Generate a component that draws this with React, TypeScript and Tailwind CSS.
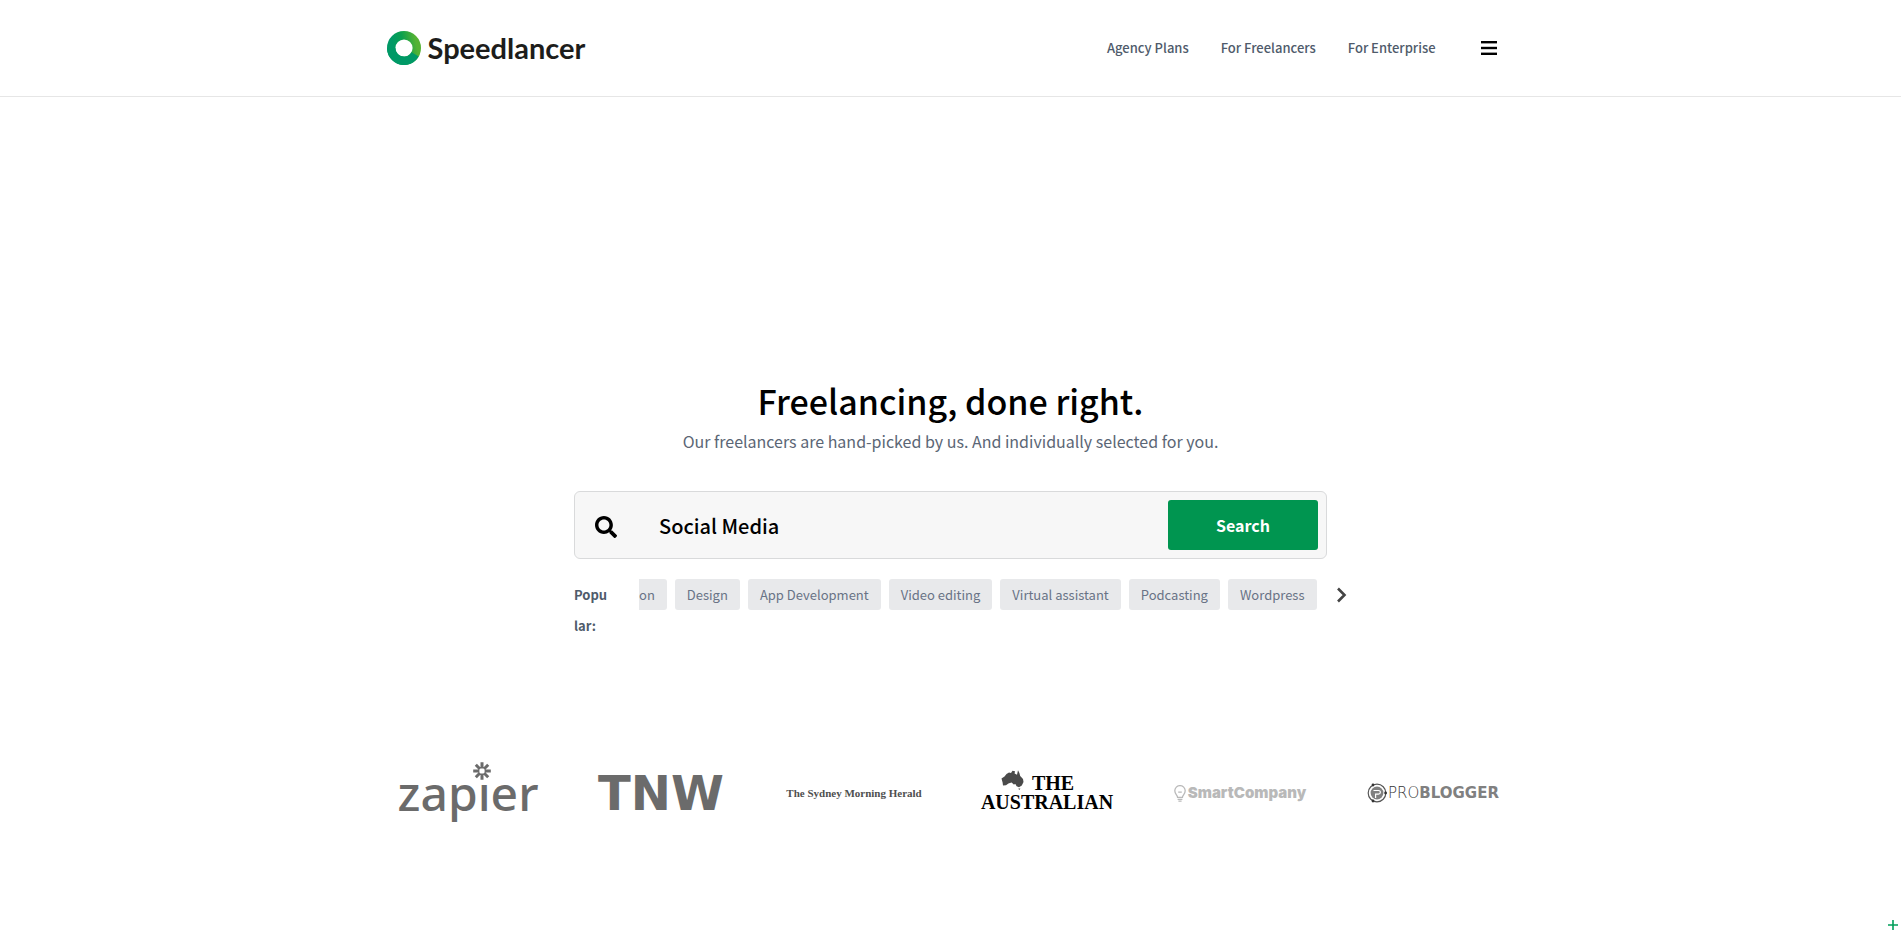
import type { ReactNode } from "react";
import { FaSearch } from "react-icons/fa";

const navLinks = ["Agency Plans", "For Freelancers", "For Enterprise"];

const popularTags = [
  "Design",
  "App Development",
  "Video editing",
  "Virtual assistant",
  "Podcasting",
  "Wordpress",
];

function SpeedlancerLogo() {
  return (
    <a href="#" className="flex items-center gap-[7px]">
      <svg width="34" height="34" viewBox="0 0 34 34" aria-hidden="true">
        <defs>
          <linearGradient id="ring" x1="0" y1="0.6" x2="1" y2="0.4">
            <stop offset="0.1" stopColor="#009966" />
            <stop offset="0.5" stopColor="#0aa04f" />
            <stop offset="1" stopColor="#54b233" />
          </linearGradient>
        </defs>
        <circle cx="17" cy="17" r="12.8" fill="none" stroke="url(#ring)" strokeWidth="8.4" />
        <path
          d="M28.1 23.4 A12.8 12.8 0 0 1 4.2 17"
          fill="none"
          stroke="#009966"
          strokeWidth="8.4"
        />
      </svg>
      <span className="font-['Lato',sans-serif] text-[29px] leading-[34px] font-bold text-[#1d1d1b]">
        Speedlancer
      </span>
    </a>
  );
}

function Header() {
  return (
    <header className="border-b border-[#e6e6e6]">
      <div className="mx-auto flex h-24 max-w-[1128px] items-center justify-between">
        <SpeedlancerLogo />
        <div className="flex items-center pr-[18px]">
          <nav className="flex gap-8">
            {navLinks.map((label) => (
              <a
                key={label}
                href="#"
                className="text-[13px] leading-6 font-medium whitespace-nowrap text-[#4f5b6b]"
              >
                {label}
              </a>
            ))}
          </nav>
          <button type="button" aria-label="Menu" className="ml-[45px] text-black">
            <svg width="16" height="14" viewBox="0 0 16 14" fill="currentColor" aria-hidden="true">
              <rect y="0" width="16" height="2.4" />
              <rect y="5.8" width="16" height="2.4" />
              <rect y="11.6" width="16" height="2.4" />
            </svg>
          </button>
        </div>
      </div>
    </header>
  );
}

function SearchBar() {
  return (
    <form
      className="flex items-center rounded-md border border-[#d9dadb] bg-[#f7f7f7] p-2"
      onSubmit={(event) => event.preventDefault()}
    >
      <label htmlFor="skill" aria-label="Skill" className="ml-3 shrink-0 pt-1 text-black">
        <FaSearch size={22} />
      </label>
      <input
        id="skill"
        type="text"
        defaultValue="Social Media"
        className="ml-[42px] h-[50px] min-w-0 flex-1 bg-transparent text-[20px] font-medium text-black outline-none"
      />
      <button
        type="submit"
        className="h-[50px] w-[150px] shrink-0 rounded-[3px] bg-[#009550] text-[16px] font-bold text-white"
      >
        Search
      </button>
    </form>
  );
}

function PopularTags() {
  return (
    <div className="mt-5 -mr-5 flex items-start text-[13px] leading-[31px]">
      <div className="mr-7 w-[37px] shrink-0 font-bold break-all text-[#4f5b6b]">Popular:</div>
      <div className="flex min-w-0 flex-1 gap-2 overflow-hidden text-[#697386]">
        <a href="#" className="shrink-0 rounded-r-[3px] bg-[#e8e9eb] pr-3">
          on
        </a>
        {popularTags.map((tag) => (
          <a
            key={tag}
            href="#"
            className="shrink-0 rounded-[3px] bg-[#e8e9eb] px-3 whitespace-nowrap"
          >
            {tag}
          </a>
        ))}
      </div>
      <button type="button" aria-label="Next" className="ml-4 flex h-[31px] items-center">
        <svg width="11" height="16" viewBox="0 0 11 16" fill="none" aria-hidden="true">
          <path d="M2 1.5 L8.5 8 L2 14.5" stroke="#444" strokeWidth="2.6" />
        </svg>
      </button>
    </div>
  );
}

function ZapierLogo() {
  return (
    <div className="relative font-['Noto_Sans',sans-serif] text-[48px] leading-[64px] font-medium text-[#6b6b6b]">
      zapier
      <svg
        className="absolute top-0 left-[73px]"
        width="22"
        height="22"
        viewBox="-11 -10 22 22"
        stroke="#6b6b6b"
        strokeWidth="3"
        aria-hidden="true"
      >
        <rect x="-7" y="-8" width="14" height="20" fill="#fff" stroke="none" />
        <path d="M0 -8.8V-2.6M0 8.8V2.6M-8.8 0H-2.6M8.8 0H2.6M-6.2 -6.2L-2 -2M6.2 6.2L2 2M-6.2 6.2L-2 2M6.2 -6.2L2 -2" />
      </svg>
    </div>
  );
}

function AustralianLogo() {
  return (
    <div className="flex flex-col font-['Liberation_Serif',serif] text-[20px] leading-[19px] font-bold text-black">
      <div className="flex items-start gap-2 pl-5">
        <svg
          className="-mt-1"
          width="23"
          height="20"
          viewBox="0 0 23 20"
          fill="#4a4a4a"
          aria-hidden="true"
        >
          <path d="M0.5 8.5 L3.5 6.5 L5.5 4 L8 2.5 L10 3 L11.5 0.8 L14 1.2 L13.6 3.4 L16 4.8 L17 0.2 L18.4 3 L19.2 6 L22 9 L22.5 12 L20.8 15.6 L18 17.2 L15.6 16.2 L14.4 14 L12.8 14.4 L10.6 12.6 L7.4 13.6 L5 15.2 L2 15.4 L1.6 12.4 Z" />
          <path d="M17.4 18.4 h2 l-0.8 1.4 h-0.6 Z" />
        </svg>
        <span>THE</span>
      </div>
      <span>AUSTRALIAN</span>
    </div>
  );
}

function SmartCompanyLogo() {
  return (
    <div className="flex items-center gap-[2px] text-[#b9b9b9]">
      <svg
        width="12"
        height="17"
        viewBox="0 0 12 17"
        fill="none"
        stroke="currentColor"
        strokeWidth="1.3"
        aria-hidden="true"
      >
        <path d="M3.6 12.4 C3.6 10 0.8 9.4 0.8 5.8 A5.2 5.2 0 0 1 11.2 5.8 C11.2 9.4 8.4 10 8.4 12.4 Z" />
        <path d="M4.2 7.2 H7.8 M3.6 14.4 H8.4 M4.4 16.2 H7.6" />
      </svg>
      <span className="font-['Inter',sans-serif] text-[15px] leading-5 font-black">
        SmartCompany
      </span>
    </div>
  );
}

function ProBloggerLogo() {
  return (
    <div className="flex items-center gap-px">
      <svg width="20" height="20" viewBox="0 0 20 20" fill="none" aria-hidden="true">
        <circle cx="10" cy="10" r="8.8" stroke="#555" strokeWidth="1.2" />
        <circle cx="10" cy="10" r="6.4" fill="#808080" />
        <path d="M6.5 7.5 H11.5 A1.8 1.8 0 0 1 11.5 11.2 H8.6 V15" stroke="#fff" strokeWidth="1.2" />
        <circle cx="6" cy="2" r="1.4" fill="#333" />
        <circle cx="6" cy="18" r="1.4" fill="#333" />
        <circle cx="18.6" cy="10" r="1.4" fill="#333" />
      </svg>
      <span className="font-['DejaVu_Sans',sans-serif] text-[15px] leading-5 font-extralight text-[#333]">
        PRO<span className="font-bold text-[#808080]">BLOGGER</span>
      </span>
    </div>
  );
}

function Press({ children }: { children: ReactNode }) {
  return <li className="flex h-16 items-center justify-center whitespace-nowrap">{children}</li>;
}

function PressLogos() {
  return (
    <ul className="mx-auto grid max-w-[1158px] grid-cols-6">
      <Press>
        <ZapierLogo />
      </Press>
      <Press>
        <span className="font-['DejaVu_Sans',sans-serif] text-[48px] leading-[48px] font-bold text-[#6b6b6b]">
          TNW
        </span>
      </Press>
      <Press>
        <span className="font-['Liberation_Serif',serif] text-[11px] leading-5 font-bold text-[#4f4f4f]">
          The Sydney Morning Herald
        </span>
      </Press>
      <Press>
        <AustralianLogo />
      </Press>
      <Press>
        <SmartCompanyLogo />
      </Press>
      <Press>
        <ProBloggerLogo />
      </Press>
    </ul>
  );
}

export default function App() {
  return (
    <div className="relative min-h-screen bg-white font-['Noto_Sans_CJK_SC',sans-serif]">
      <Header />
      <main>
        <section className="mx-auto max-w-[753px] pt-[280px]">
          <h1 className="mb-0.5 text-center text-[34px] leading-[48px] font-medium text-black">
            Freelancing, done right.
          </h1>
          <p className="mb-9 text-center text-[16px] leading-[28px] text-[#5b6675]">
            Our freelancers are hand-picked by us. And individually selected for you.
          </p>
          <SearchBar />
          <PopularTags />
        </section>
        <section className="pt-[120px]">
          <PressLogos />
        </section>
      </main>
      <button
        type="button"
        aria-label="Open chat"
        className="absolute right-[3px] bottom-[6px] text-[#009f5a]"
      >
        <svg width="10" height="10" viewBox="0 0 10 10" stroke="currentColor" strokeWidth="1.6" aria-hidden="true">
          <path d="M5 0 V10 M0 5 H10" />
        </svg>
      </button>
    </div>
  );
}
